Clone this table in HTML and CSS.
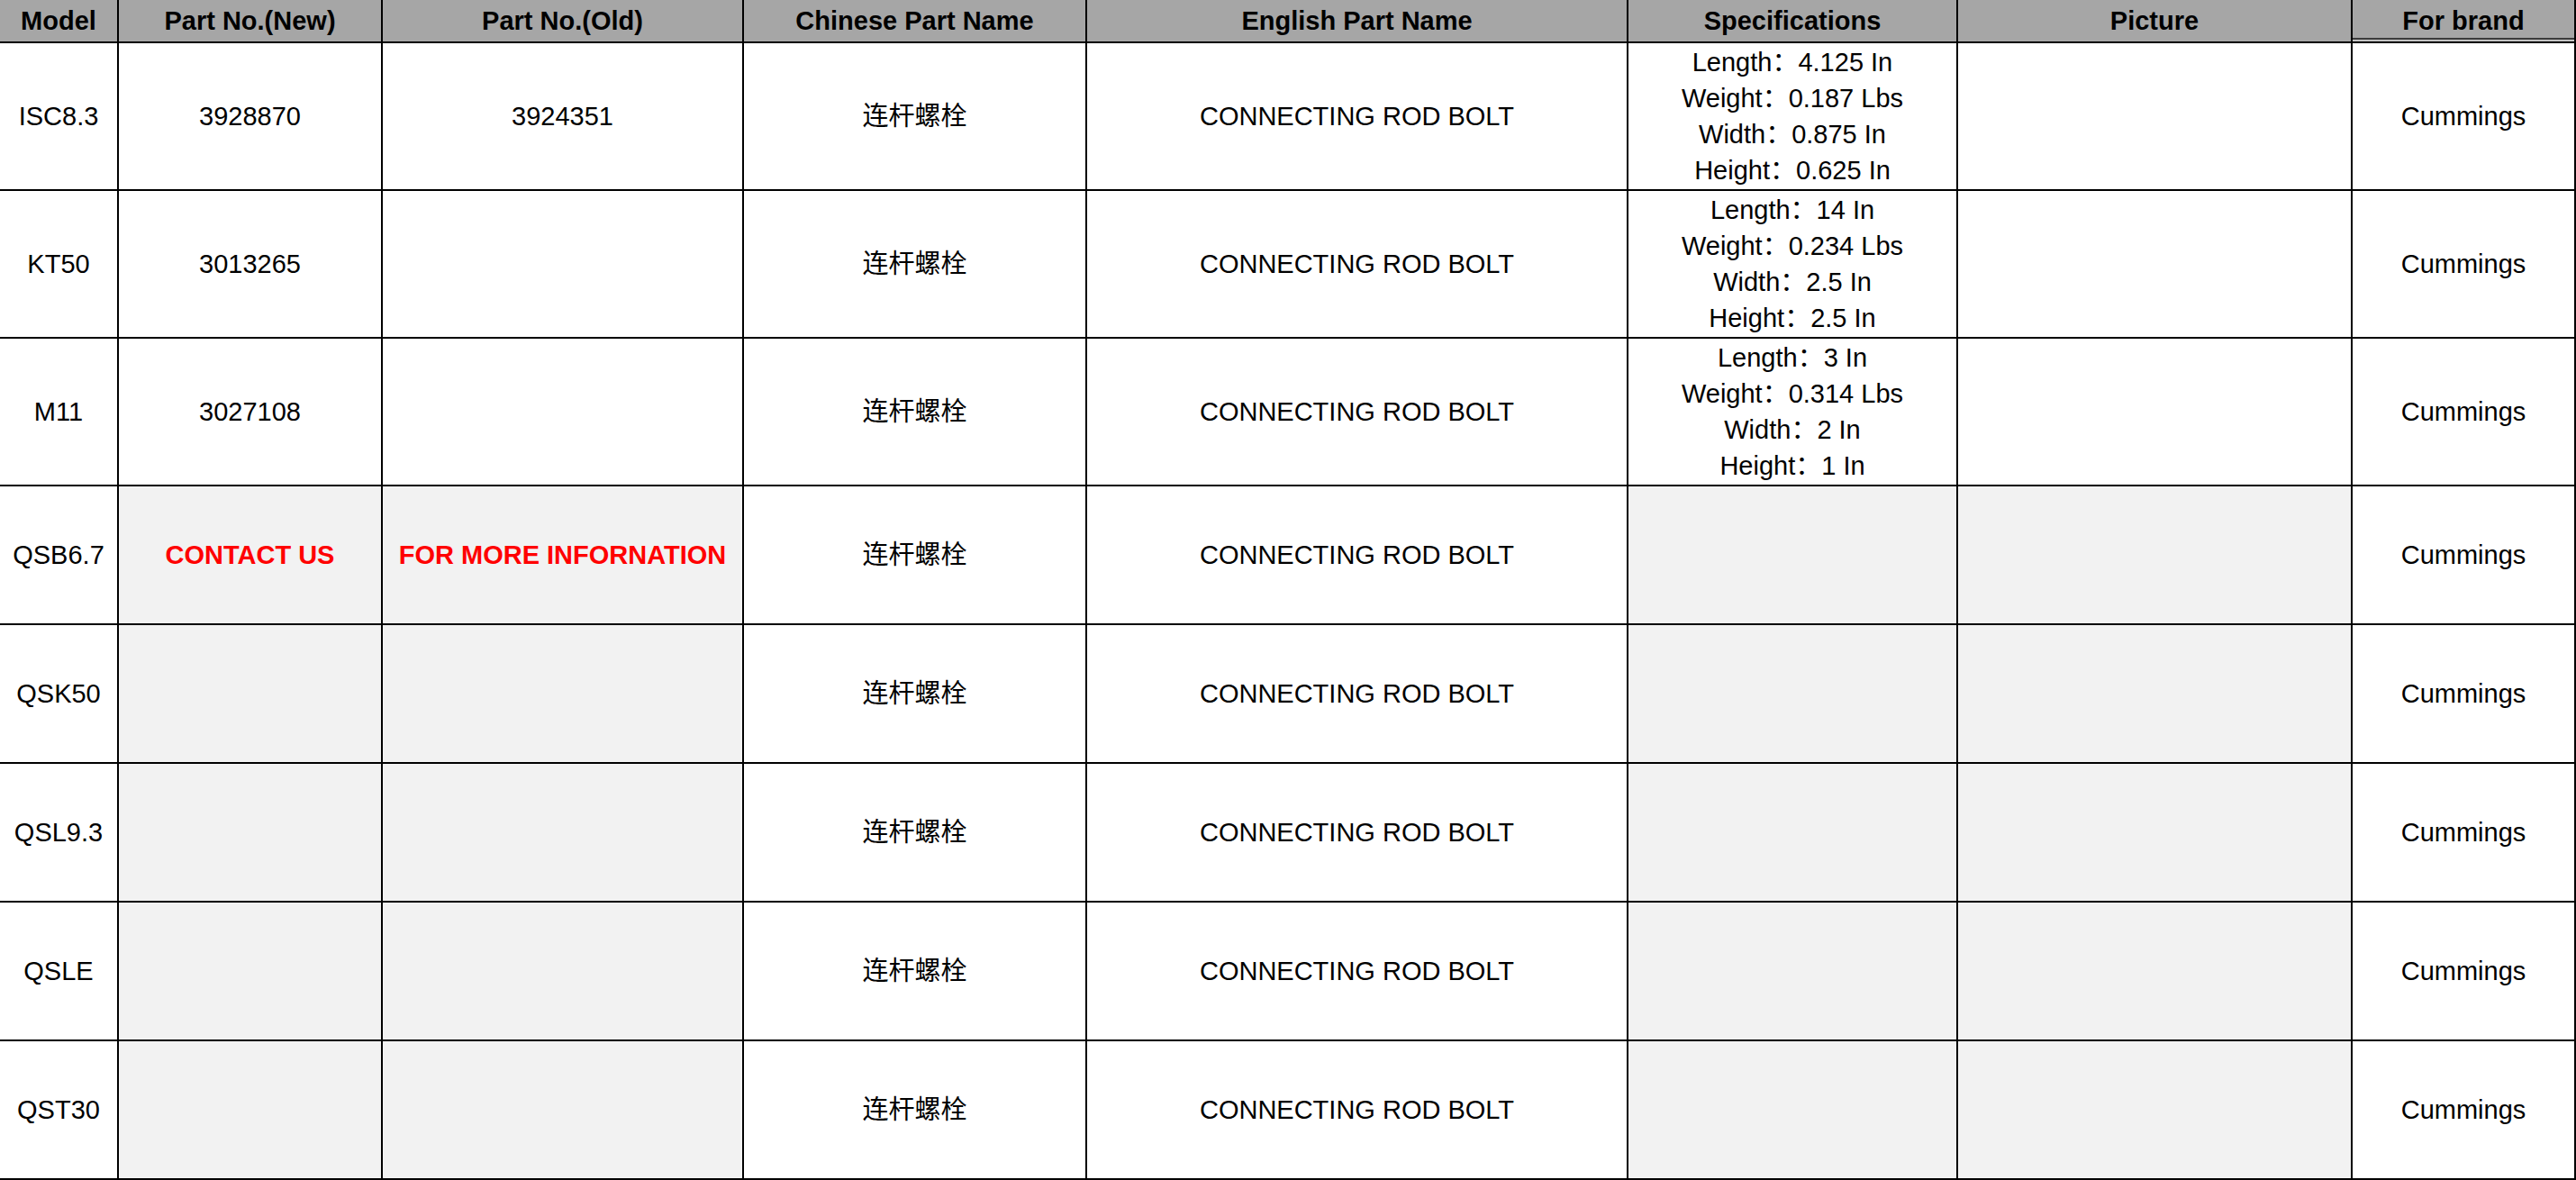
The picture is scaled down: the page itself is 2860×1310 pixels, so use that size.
FILE: index.html
```html
<!DOCTYPE html>
<html lang="en">
<head>
<meta charset="utf-8">
<title>Connecting Rod Bolt Parts</title>
<link rel="stylesheet" href="styles.css">
</head>
<body>
<table class="parts">
  <colgroup>
    <col class="c-model">
    <col class="c-new">
    <col class="c-old">
    <col class="c-cn">
    <col class="c-en">
    <col class="c-spec">
    <col class="c-pic">
    <col class="c-brand">
  </colgroup>
  <thead>
    <tr class="head">
      <th>Model</th>
      <th>Part No.(New)</th>
      <th>Part No.(Old)</th>
      <th>Chinese Part Name</th>
      <th>English Part Name</th>
      <th>Specifications</th>
      <th>Picture</th>
      <th class="brand-head">For brand</th>
    </tr>
  </thead>
  <tbody>
    <tr class="tall">
      <td>ISC8.3</td>
      <td>3928870</td>
      <td>3924351</td>
      <td>连杆螺栓</td>
      <td>CONNECTING ROD BOLT</td>
      <td class="spec">Length：4.125 In<br>Weight：0.187 Lbs<br>Width：0.875 In<br>Height：0.625 In</td>
      <td></td>
      <td>Cummings</td>
    </tr>
    <tr class="tall">
      <td>KT50</td>
      <td>3013265</td>
      <td></td>
      <td>连杆螺栓</td>
      <td>CONNECTING ROD BOLT</td>
      <td class="spec">Length：14 In<br>Weight：0.234 Lbs<br>Width：2.5 In<br>Height：2.5 In</td>
      <td></td>
      <td>Cummings</td>
    </tr>
    <tr class="tall">
      <td>M11</td>
      <td>3027108</td>
      <td></td>
      <td>连杆螺栓</td>
      <td>CONNECTING ROD BOLT</td>
      <td class="spec">Length：3 In<br>Weight：0.314 Lbs<br>Width：2 In<br>Height：1 In</td>
      <td></td>
      <td>Cummings</td>
    </tr>
    <tr class="short">
      <td>QSB6.7</td>
      <td class="fill note">CONTACT US</td>
      <td class="fill note">FOR MORE INFORNATION</td>
      <td>连杆螺栓</td>
      <td>CONNECTING ROD BOLT</td>
      <td class="fill"></td>
      <td class="fill"></td>
      <td>Cummings</td>
    </tr>
    <tr class="short">
      <td>QSK50</td>
      <td class="fill"></td>
      <td class="fill"></td>
      <td>连杆螺栓</td>
      <td>CONNECTING ROD BOLT</td>
      <td class="fill"></td>
      <td class="fill"></td>
      <td>Cummings</td>
    </tr>
    <tr class="short">
      <td>QSL9.3</td>
      <td class="fill"></td>
      <td class="fill"></td>
      <td>连杆螺栓</td>
      <td>CONNECTING ROD BOLT</td>
      <td class="fill"></td>
      <td class="fill"></td>
      <td>Cummings</td>
    </tr>
    <tr class="short">
      <td>QSLE</td>
      <td class="fill"></td>
      <td class="fill"></td>
      <td>连杆螺栓</td>
      <td>CONNECTING ROD BOLT</td>
      <td class="fill"></td>
      <td class="fill"></td>
      <td>Cummings</td>
    </tr>
    <tr class="short">
      <td>QST30</td>
      <td class="fill"></td>
      <td class="fill"></td>
      <td>连杆螺栓</td>
      <td>CONNECTING ROD BOLT</td>
      <td class="fill"></td>
      <td class="fill"></td>
      <td>Cummings</td>
    </tr>
  </tbody>
</table>
</body>
</html>
```
FILE: styles.css
```css
html, body {
  margin: 0;
  padding: 0;
  background: #ffffff;
}

body {
  font-family: "Liberation Sans", Arial, "Noto Sans CJK SC", sans-serif;
  font-size: 29px;
  color: #000000;
  width: 2860px;
  height: 1310px;
  overflow: hidden;
}

.parts {
  width: 2860px;
  table-layout: fixed;
  border-collapse: separate;
  border-spacing: 0;
}

.c-model { width: 132px; }
.c-new   { width: 293px; }
.c-old   { width: 401px; }
.c-cn    { width: 381px; }
.c-en    { width: 601px; }
.c-spec  { width: 366px; }
.c-pic   { width: 438px; }
.c-brand { width: 248px; }

.parts th,
.parts td {
  box-sizing: border-box;
  padding: 0;
  border-right: 2px solid #000000;
  border-bottom: 2px solid #000000;
  text-align: center;
  vertical-align: middle;
  line-height: 40px;
  white-space: nowrap;
  overflow: hidden;
}

.head {
  height: 48px;
}

.head th {
  background: #a6a6a6;
  font-weight: bold;
  line-height: 34px;
}

.brand-head {
  box-shadow: inset 0 -2px 0 #c4c4c4, inset 0 -4px 0 #3c3c3c;
}

.tall {
  height: 164px;
}

.short {
  height: 154px;
}

.fill {
  background: #f2f2f2;
}

.note {
  color: #ff0000;
  font-weight: bold;
}

.spec {
  line-height: 40px;
}
```
